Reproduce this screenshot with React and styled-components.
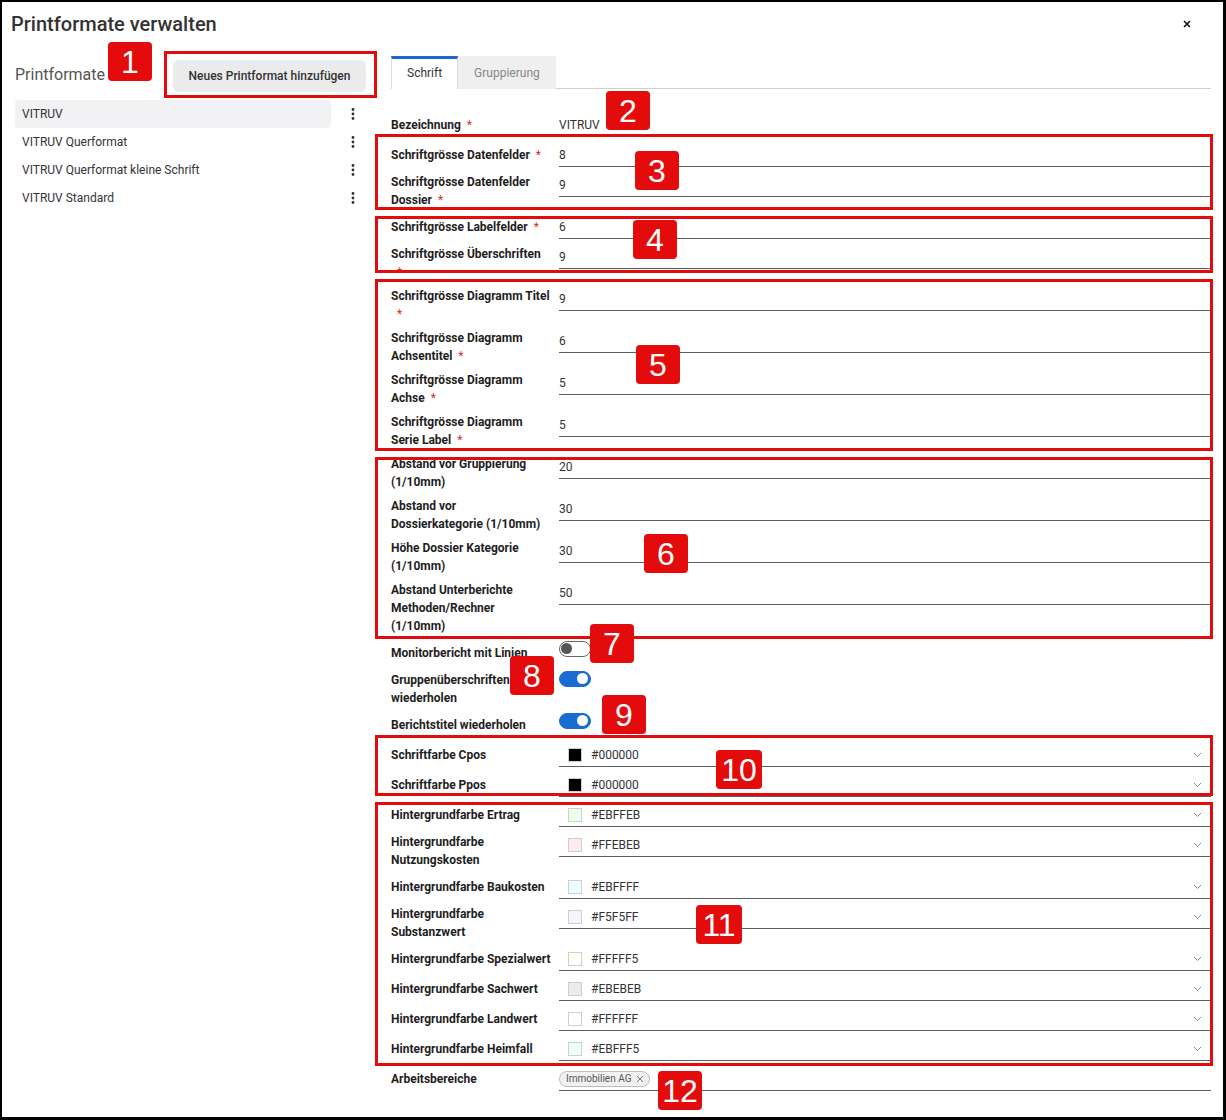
import styled, { createGlobalStyle } from "styled-components";

const Global = createGlobalStyle`
  html, body { margin: 0; padding: 0; background: #fff; }
  body { font-family: Roboto, "Liberation Sans", Arial, sans-serif; color: #222; }
  * { box-sizing: border-box; }
`;

const Page = styled.div`
  position: relative;
  width: 1226px;
  height: 1120px;
  border-style: solid;
  border-color: #000;
  border-width: 2px 3px 3px 2px;
  background: #fff;
  overflow: hidden;
`;

const Header = styled.div`
  display: flex;
  align-items: center;
  justify-content: space-between;
  height: 44px;
  padding: 0 30px 0 9px;
`;

const Title = styled.h1`
  margin: 0;
  font-size: 20px;
  font-weight: 500;
  color: #333;
`;

const Close = styled.button`
  display: flex;
  align-items: center;
  justify-content: center;
  width: 12px;
  height: 12px;
  padding: 0;
  border: 0;
  background: none;
`;

const Body = styled.div`
  display: flex;
  align-items: flex-start;
`;

const Side = styled.div`
  width: 362px;
  margin: 5px 0 0 13px;
`;

const SideHead = styled.div`
  position: relative;
  display: flex;
  align-items: center;
  justify-content: space-between;
  height: 47px;
`;

const SideTitle = styled.h2`
  margin: 0;
  font-size: 16px;
  font-weight: 400;
  color: #555;
`;

const Frame = styled.div`
  border: 3px solid #e30b0b;
  padding: 6px 8px 3px 6px;
`;

const AddButton = styled.button`
  width: 193px;
  height: 32px;
  border: 0;
  border-radius: 6px;
  background: #ebebeb;
  font-family: Roboto, sans-serif;
  font-size: 12px;
  font-weight: 500;
  color: #333;
`;

const List = styled.ul`
  list-style: none;
  margin: 2px 0 0;
  padding: 0;
`;

const Item = styled.li`
  display: flex;
  align-items: center;
  height: 28px;
`;

const ItemName = styled.span`
  display: flex;
  align-items: center;
  width: 316px;
  height: 28px;
  padding-left: 7px;
  border-radius: 4px;
  background: ${(p) => (p.$active ? "#f2f2f4" : "transparent")};
  font-size: 12px;
  color: #333;
`;

const Kebab = styled.span`
  display: flex;
  justify-content: center;
  width: 44px;
`;

const Main = styled.div`
  width: 820px;
  margin: 10px 0 0 14px;
`;

const Tabs = styled.div`
  display: flex;
  border-bottom: 1px solid #cfcfcf;
`;

const Tab = styled.div`
  display: flex;
  align-items: center;
  height: 33px;
  padding: 0 15px 2px;
  margin-bottom: -1px;
  font-size: 12px;
  border-top: 3px solid ${(p) => (p.$active ? "#1766d1" : "#efefef")};
  border-left: 1px solid ${(p) => (p.$active ? "#dcdcdc" : "#efefef")};
  border-right: 1px solid ${(p) => (p.$active ? "#dcdcdc" : "#efefef")};
  background: ${(p) => (p.$active ? "#fff" : "#efefef")};
  color: ${(p) => (p.$active ? "#333" : "#888")};
`;

const Form = styled.div`
  margin-top: 21px;
`;

const Group = styled.div`
  position: relative;
  &::after {
    content: "";
    position: absolute;
    top: ${(p) => p.$top}px;
    bottom: ${(p) => p.$bottom}px;
    left: -16px;
    right: -2px;
    border: 3px solid #e30b0b;
    pointer-events: none;
    z-index: 2;
  }
`;

const Row = styled.div`
  position: relative;
  display: grid;
  grid-template-columns: 160px 1fr;
  column-gap: 8px;
  padding: 3px 0;
`;

const Label = styled.div`
  display: flex;
  flex-direction: column;
  justify-content: center;
  min-height: 24px;
  font-size: 12px;
  font-weight: 700;
  line-height: 18px;
  color: #1e1e1e;
`;

const Line = styled.span`
  display: block;
  height: 18px;
  white-space: nowrap;
`;

const Req = styled.span`
  margin-left: 6px;
  font-weight: 400;
  color: #d32f2f;
`;

const Field = styled.div`
  align-self: start;
  display: flex;
  align-items: center;
  gap: 9px;
  height: 24px;
  padding-left: ${(p) => (p.$swatch ? "9px" : "0")};
  padding-right: 9px;
  border-bottom: 1px solid ${(p) => (p.$plain ? "transparent" : "#5e5e5e")};
  font-size: 12px;
  color: #333;
`;

const Swatch = styled.span`
  width: 14px;
  height: 14px;
  border: 1px solid #cfcfcf;
  background: ${(p) => p.$color};
`;

const Chevron = styled.span`
  display: flex;
  margin-left: auto;
`;

const ToggleCell = styled.div`
  align-self: start;
  height: 24px;
`;

const Toggle = styled.span`
  position: relative;
  display: block;
  width: 32px;
  height: 16px;
  border-radius: 8px;
  border: 1.5px solid ${(p) => (p.$on ? "#1a6dd0" : "#666")};
  background: ${(p) => (p.$on ? "#1a6dd0" : "#fff")};
  &::after {
    content: "";
    position: absolute;
    top: 1px;
    left: ${(p) => (p.$on ? "17px" : "1px")};
    width: 11px;
    height: 11px;
    border-radius: 50%;
    background: ${(p) => (p.$on ? "#fff" : "#555")};
  }
`;

const Chip = styled.span`
  display: inline-flex;
  align-items: center;
  gap: 5px;
  height: 16px;
  padding: 0 5px 0 6px;
  border: 1px solid #bdbdbd;
  border-radius: 8px;
  background: #f1f1f1;
  font-size: 10px;
  color: #555;
`;

const Badge = styled.div`
  position: absolute;
  left: ${(p) => p.$x}px;
  top: ${(p) => p.$y}px;
  z-index: 3;
  display: flex;
  align-items: center;
  justify-content: center;
  width: ${(p) => (p.$wide ? 46 : 44)}px;
  height: 39px;
  border-radius: 4px;
  background: #e30b0b;
  color: #fff;
  font-family: "Liberation Sans", Arial, sans-serif;
  font-size: 32px;
  line-height: 1;
`;

const Dots = () => (
  <svg width="4" height="12" viewBox="0 0 4 12">
    <circle cx="2" cy="1.5" r="1.4" fill="#333" />
    <circle cx="2" cy="6" r="1.4" fill="#333" />
    <circle cx="2" cy="10.5" r="1.4" fill="#333" />
  </svg>
);

const Down = () => (
  <svg width="9" height="6" viewBox="0 0 9 6">
    <path d="M1 1l3.5 3.5L8 1" fill="none" stroke="#8a8a8a" strokeWidth="1" />
  </svg>
);

// label lines are given explicitly so the wrapping matches the form
const Lbl = ({ lines, req }) => (
  <Label>
    {lines.map((l, i) => (
      <Line key={i}>
        {l}
        {req && i === lines.length - 1 && <Req>*</Req>}
      </Line>
    ))}
  </Label>
);

const NumRow = ({ label, req, value, children }) => (
  <Row>
    <Lbl lines={label} req={req} />
    <Field>{value}</Field>
    {children}
  </Row>
);

const ToggleRow = ({ label, on, children }) => (
  <Row>
    <Lbl lines={label} />
    <ToggleCell>
      <Toggle $on={on} />
    </ToggleCell>
    {children}
  </Row>
);

const ColorRow = ({ label, color }) => (
  <Row>
    <Lbl lines={label} />
    <Field $swatch>
      <Swatch $color={color} />
      {color}
      <Chevron>
        <Down />
      </Chevron>
    </Field>
  </Row>
);

const formats = [
  "VITRUV",
  "VITRUV Querformat",
  "VITRUV Querformat kleine Schrift",
  "VITRUV Standard",
];

const backgrounds = [
  [["Hintergrundfarbe Ertrag"], "#EBFFEB"],
  [["Hintergrundfarbe", "Nutzungskosten"], "#FFEBEB"],
  [["Hintergrundfarbe Baukosten"], "#EBFFFF"],
  [["Hintergrundfarbe", "Substanzwert"], "#F5F5FF"],
  [["Hintergrundfarbe Spezialwert"], "#FFFFF5"],
  [["Hintergrundfarbe Sachwert"], "#EBEBEB"],
  [["Hintergrundfarbe Landwert"], "#FFFFFF"],
  [["Hintergrundfarbe Heimfall"], "#EBFFF5"],
];

export default function App() {
  return (
    <Page>
      <Global />
      <Header>
        <Title>Printformate verwalten</Title>
        <Close>
          <svg width="8" height="8" viewBox="0 0 8 8">
            <path d="M1 1l6 6M7 1L1 7" stroke="#111" strokeWidth="1.6" />
          </svg>
        </Close>
      </Header>
      <Body>
        <Side>
          <SideHead>
            <SideTitle>Printformate</SideTitle>
            <Badge $x={93} $y={-9}>1</Badge>
            <Frame>
              <AddButton>Neues Printformat hinzufügen</AddButton>
            </Frame>
          </SideHead>
          <List>
            {formats.map((f, i) => (
              <Item key={f}>
                <ItemName $active={i === 0}>{f}</ItemName>
                <Kebab>
                  <Dots />
                </Kebab>
              </Item>
            ))}
          </List>
        </Side>

        <Main>
          <Tabs>
            <Tab $active>Schrift</Tab>
            <Tab>Gruppierung</Tab>
          </Tabs>
          <Form>
            <Row>
              <Lbl lines={["Bezeichnung"]} req />
              <Field $plain>VITRUV</Field>
              <Badge $x={215} $y={-19}>2</Badge>
            </Row>

            <Group $top={-6} $bottom={2}>
              <NumRow label={["Schriftgrösse Datenfelder"]} req value="8" />
              <NumRow label={["Schriftgrösse Datenfelder", "Dossier"]} req value="9" />
              <Badge $x={244} $y={11}>3</Badge>
            </Group>

            <Group $top={4} $bottom={11}>
              <NumRow label={["Schriftgrösse Labelfelder"]} req value="6" />
              <NumRow label={["Schriftgrösse Überschriften", ""]} req value="9" />
              <Badge $x={242} $y={8}>4</Badge>
            </Group>

            <Group $top={-5} $bottom={1}>
              <NumRow label={["Schriftgrösse Diagramm Titel", ""]} req value="9" />
              <NumRow label={["Schriftgrösse Diagramm", "Achsentitel"]} req value="6" />
              <NumRow label={["Schriftgrösse Diagramm", "Achse"]} req value="5" />
              <NumRow label={["Schriftgrösse Diagramm", "Serie Label"]} req value="5" />
              <Badge $x={245} $y={61}>5</Badge>
            </Group>

            <Group $top={5} $bottom={-1}>
              <NumRow label={["Abstand vor Gruppierung", "(1/10mm)"]} value="20" />
              <NumRow label={["Abstand vor", "Dossierkategorie (1/10mm)"]} value="30" />
              <NumRow label={["Höhe Dossier Kategorie", "(1/10mm)"]} value="30" />
              <NumRow
                label={["Abstand Unterberichte", "Methoden/Rechner", "(1/10mm)"]}
                value="50"
              />
              <Badge $x={253} $y={82}>6</Badge>
            </Group>

            <ToggleRow label={["Monitorbericht mit Linien"]} on={false}>
              <Badge $x={199} $y={-14}>7</Badge>
            </ToggleRow>
            <ToggleRow label={["Gruppenüberschriften", "wiederholen"]} on>
              <Badge $x={119} $y={-12}>8</Badge>
            </ToggleRow>
            <ToggleRow label={["Berichtstitel wiederholen"]} on>
              <Badge $x={211} $y={-15}>9</Badge>
            </ToggleRow>

            <Group $top={-5} $bottom={4}>
              <ColorRow label={["Schriftfarbe Cpos"]} color="#000000" />
              <ColorRow label={["Schriftfarbe Ppos"]} color="#000000" />
              <Badge $x={325} $y={10} $wide>10</Badge>
            </Group>

            <Group $top={2} $bottom={-2}>
              {backgrounds.map(([l, c]) => (
                <ColorRow key={l.join(" ")} label={l} color={c} />
              ))}
              <Badge $x={305} $y={105} $wide>11</Badge>
            </Group>

            <Row>
              <Lbl lines={["Arbeitsbereiche"]} />
              <Field>
                <Chip>
                  Immobilien AG
                  <svg width="8" height="8" viewBox="0 0 8 8">
                    <path d="M1 1l6 6M7 1L1 7" stroke="#777" strokeWidth="1" />
                  </svg>
                </Chip>
              </Field>
              <Badge $x={267} $y={7}>12</Badge>
            </Row>
          </Form>
        </Main>
      </Body>
    </Page>
  );
}
